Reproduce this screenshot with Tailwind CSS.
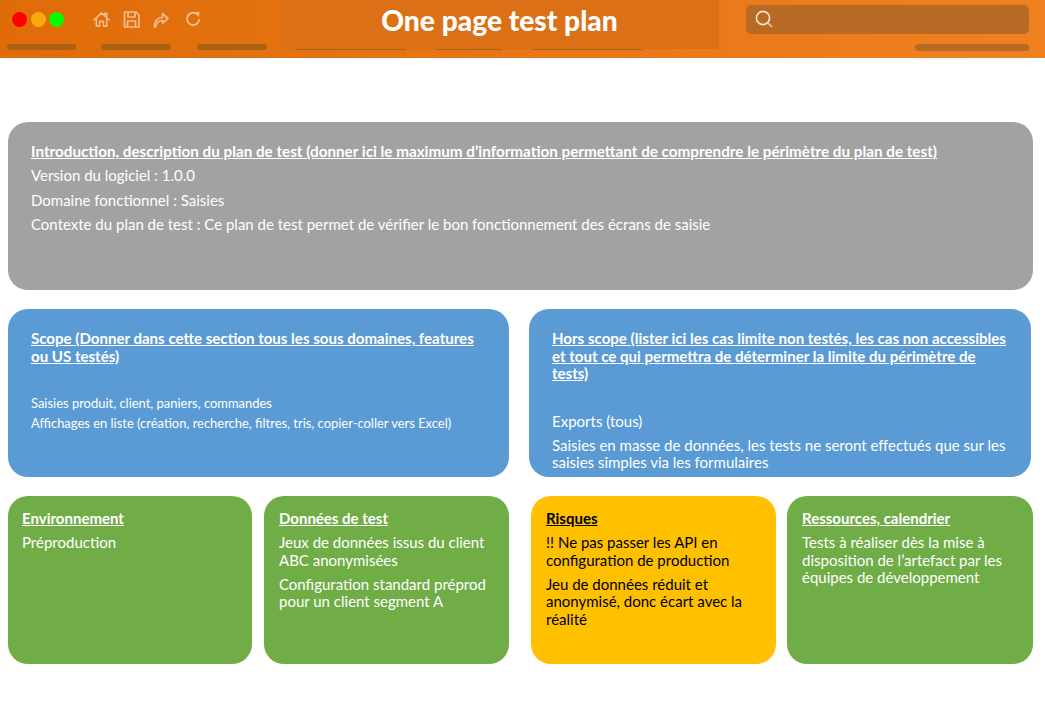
<!DOCTYPE html>
<html lang="fr">
<head>
<meta charset="UTF-8">
<title>One page test plan</title>
<script src="https://cdn.jsdelivr.net/npm/@tailwindcss/browser@4"></script>
</head>
<body class="bg-white font-['Lato',sans-serif] w-[1045px] h-[727px] overflow-hidden">

  <!-- window bar -->
  <header class="relative h-[58px] bg-gradient-to-r from-[#df6c08] to-[#f08020]">
    <div class="flex h-[44px] items-start">
      <div class="flex gap-[3.5px] pl-[12px] pt-[12px]">
        <span class="w-[15px] h-[15px] rounded-full bg-[#ff0000]"></span>
        <span class="w-[15px] h-[15px] rounded-full bg-[#f9a90f]"></span>
        <span class="w-[15px] h-[15px] rounded-full bg-[#00ff00]"></span>
      </div>
      <div class="flex gap-[13px] pl-[29px] pt-[11px] text-[#f3bd8e]">
        <svg class="w-[17px] h-[17px]" viewBox="0 0 18 17" fill="none" stroke="currentColor" stroke-width="1.7" stroke-linejoin="round" stroke-linecap="round"><path d="M1 9 L9 1.5 L17 9 M3.5 7.5 V15.5 H7 V10.5 H11 V15.5 H14.5 V7.5"/><path d="M12.5 3.5 V2 H14.5 V6"/></svg>
        <svg class="w-[17px] h-[17px]" viewBox="0 0 17 17" fill="none" stroke="currentColor" stroke-width="1.7" stroke-linejoin="round"><path d="M1.5 1 H13 L16 4 V16 H1.5 Z"/><path d="M5 1 V6 H12 V1 M4.5 16 V10 H12.5 V16"/></svg>
        <svg class="w-[16px] h-[17px]" viewBox="0 0 16 17" fill="none" stroke="currentColor" stroke-width="1.7" stroke-linejoin="round"><path d="M1.5 16 C1 10 4.5 6.5 9.5 6.5 V2.5 L15 7.5 L9.5 12 V9.5 C6 9.5 3.5 11 2.5 16 Z"/></svg>
        <svg class="w-[16px] h-[16px] ml-[3px]" viewBox="0 0 16 16" fill="none" stroke="currentColor" stroke-width="1.9"><path d="M12.6 3.5 A6.2 6.2 0 1 0 14.4 8"/><path d="M9.5 1.5 L14.5 1 L14 6 Z" fill="currentColor" stroke="none"/></svg>
      </div>
      <div class="ml-auto mr-[16px] mt-[5px] w-[283px] h-[29px] rounded-[5px] bg-[#b66a24] pl-[9px] pt-[5px] text-[#fbe3cc]">
        <svg class="w-[18px] h-[18px]" viewBox="0 0 18 18" fill="none" stroke="currentColor" stroke-width="1.6"><circle cx="8" cy="8" r="6.6"/><path d="M13 13 L17 17" stroke="#f6c59a"/></svg>
      </div>
    </div>
    <div class="flex h-[7px] pl-[7px] pr-[16px]">
      <span class="w-[69px] h-[6px] rounded-full bg-[#ac6014]"></span>
      <span class="w-[70px] h-[6px] rounded-full bg-[#ac6014] ml-[25px]"></span>
      <span class="w-[70px] h-[6px] rounded-full bg-[#ac6014] ml-[26px]"></span>
      <span class="w-[113px] h-[6px] rounded-full bg-[#ac6014] ml-[27px]"></span>
      <span class="w-[68px] h-[6px] rounded-full bg-[#ac6014] ml-[28px]"></span>
      <span class="w-[113px] h-[6px] rounded-full bg-[#ac6014] ml-[28px]"></span>
      <span class="w-[114px] h-[7px] rounded-full bg-[#b66a24] ml-auto"></span>
    </div>
    <div class="absolute left-[280px] top-0 w-[439px] h-[49px] bg-[#dc7016] flex justify-center pt-[2px] text-white font-black text-[28.2px] leading-[36px]">One page test plan</div>
  </header>

  <main class="pt-[64px] flex flex-col gap-[19px]">
    <section class="mx-[8px] w-[1025px] h-[168px] rounded-[20px] bg-[#a2a2a2] text-white text-[15px] pl-[23px] pt-[17px] leading-[24.4px]">
      <p class="font-bold underline text-[15.24px]">Introduction, description du plan de test (donner ici le maximum d’information permettant de comprendre le périmètre du plan de test)</p>
      <p>Version du logiciel : 1.0.0</p>
      <p>Domaine fonctionnel : Saisies</p>
      <p>Contexte du plan de test : Ce plan de test permet de vérifier le bon fonctionnement des écrans de saisie</p>
    </section>

    <div class="flex pl-[8px] gap-[20px]">
      <section class="w-[501px] h-[168px] rounded-[20px] bg-[#5b9bd5] text-white pl-[23px] pr-[20px] pt-[21px]">
        <p class="font-bold underline text-[15.07px] leading-[17.5px]">Scope (Donner dans cette section tous les sous domaines, features ou US testés)</p>
        <p class="mt-[28px] text-[12.95px] leading-[20px]">Saisies produit, client, paniers, commandes</p>
        <p class="text-[12.95px] leading-[20px]">Affichages en liste (création, recherche, filtres, tris, copier-coller vers Excel)</p>
      </section>
      <section class="w-[502px] h-[168px] rounded-[20px] bg-[#5b9bd5] text-white pl-[23px] pr-[20px] pt-[21px] text-[15px] leading-[17.5px]">
        <p class="font-bold underline text-[15.07px]">Hors scope (lister ici les cas limite non testés, les cas non accessibles et tout ce qui permettra de déterminer la limite du périmètre de tests)</p>
        <p class="mt-[30px]">Exports (tous)</p>
        <p class="mt-[6.5px]">Saisies en masse de données, les tests ne seront effectués que sur les saisies simples via les formulaires</p>
      </section>
    </div>

    <div class="flex pl-[8px] text-[15px] leading-[17.5px]">
      <section class="w-[244px] h-[168px] rounded-[20px] bg-[#70ad47] text-white pl-[14px] pr-[8px] pt-[14px]">
        <p class="font-bold underline">Environnement</p>
        <p class="mt-[6.5px]">Préproduction</p>
      </section>
      <section class="w-[245px] h-[168px] ml-[12px] rounded-[20px] bg-[#70ad47] text-white pl-[15px] pr-[8px] pt-[14px]">
        <p class="font-bold underline">Données de test</p>
        <p class="mt-[6.5px]">Jeux de données issus du client ABC anonymisées</p>
        <p class="mt-[6.5px]">Configuration standard préprod pour un client segment A</p>
      </section>
      <section class="w-[245px] h-[168px] ml-[22px] rounded-[20px] bg-[#ffc000] text-black pl-[15px] pr-[8px] pt-[14px]">
        <p class="font-bold underline">Risques</p>
        <p class="mt-[6.5px]">!! Ne pas passer les API en configuration de production</p>
        <p class="mt-[6.5px]">Jeu de données réduit et anonymisé, donc écart avec la réalité</p>
      </section>
      <section class="w-[246px] h-[168px] ml-[11px] rounded-[20px] bg-[#70ad47] text-white pl-[15px] pr-[8px] pt-[14px]">
        <p class="font-bold underline">Ressources, calendrier</p>
        <p class="mt-[6.5px]">Tests à réaliser dès la mise à disposition de l’artefact par les équipes de développement</p>
      </section>
    </div>
  </main>

</body>
</html>
